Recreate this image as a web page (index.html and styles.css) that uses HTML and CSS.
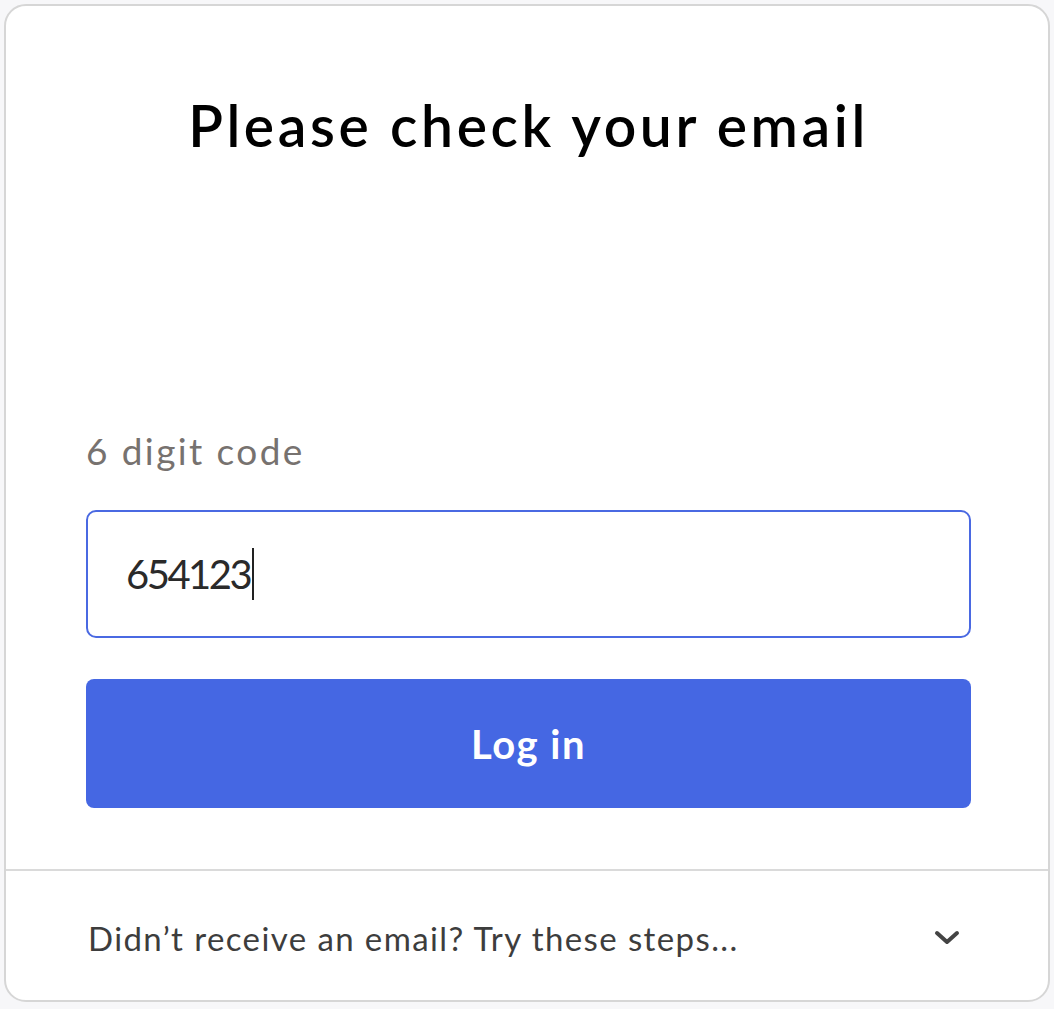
FILE: index.html
```html
<!DOCTYPE html>
<html lang="en">
<head>
    <meta charset="UTF-8">
    <meta name="viewport" content="width=device-width, initial-scale=1.0">
    <title>Please check your email</title>
    <link rel="stylesheet" href="styles.css">
</head>
<body>
    <div class="card">
        <div class="main">
            <h1>Please check your email</h1>
            <form class="code-form">
                <label class="code-label">6 digit code</label>
                <div class="code-input">
                    <span class="code-value">654123</span><span class="caret"></span>
                </div>
                <button type="submit" class="login-btn">Log in</button>
            </form>
        </div>
        <div class="help">
            <span class="help-text">Didn’t receive an email? Try these steps...</span>
            <svg class="chevron" width="26" height="16" viewBox="0 0 26 16">
                <path d="M3 3 L13 12 L23 3" fill="none" stroke="#444" stroke-width="4" stroke-linecap="round" stroke-linejoin="round"/>
            </svg>
        </div>
    </div>
</body>
</html>
```

FILE: styles.css
```css
/* Basic Styles */
body {
    font-family: Lato, "Open Sans", sans-serif;
    background-color: #f7f7f9;
    margin: 4px;
}
.card {
    width: 1046px;
    height: 998px;
    box-sizing: border-box;
    background: #fff;
    border: 2px solid #d6d6d6;
    border-radius: 22px;
    display: flex;
    flex-direction: column;
}

/* Main section */
.main {
    padding: 84px 77px 61px 80px;
    border-bottom: 2px solid #dadada;
}
h1 {
    margin: 0;
    height: 70px;
    line-height: 70px;
    text-align: center;
    font-size: 57px;
    font-weight: 600;
    letter-spacing: 3.6px;
    color: #000;
}
.code-form {
    display: flex;
    flex-direction: column;
    margin-top: 269px;
}
.code-label {
    height: 44px;
    line-height: 44px;
    font-size: 37px;
    letter-spacing: 2.4px;
    color: #77726f;
}
.code-input {
    margin-top: 37px;
    height: 128px;
    box-sizing: border-box;
    border: 2px solid #4a69e2;
    border-radius: 10px;
    padding-left: 38px;
    display: flex;
    align-items: center;
    font-size: 40px;
    letter-spacing: -2.5px;
    color: #2a2a2a;
}
.caret {
    width: 2px;
    height: 52px;
    margin-left: 2px;
    background: #222;
}
.login-btn {
    margin-top: 41px;
    height: 129px;
    border: none;
    border-radius: 8px;
    background-color: #4567e3;
    color: #fff;
    font-family: inherit;
    font-size: 40px;
    font-weight: 700;
    letter-spacing: 1.5px;
    cursor: pointer;
}

/* Help footer */
.help {
    flex: 1;
    display: flex;
    align-items: center;
    justify-content: space-between;
    padding: 4px 88px 0 82px;
}
.help-text {
    font-size: 33px;
    letter-spacing: 1.4px;
    color: #3d3d3d;
}
```
